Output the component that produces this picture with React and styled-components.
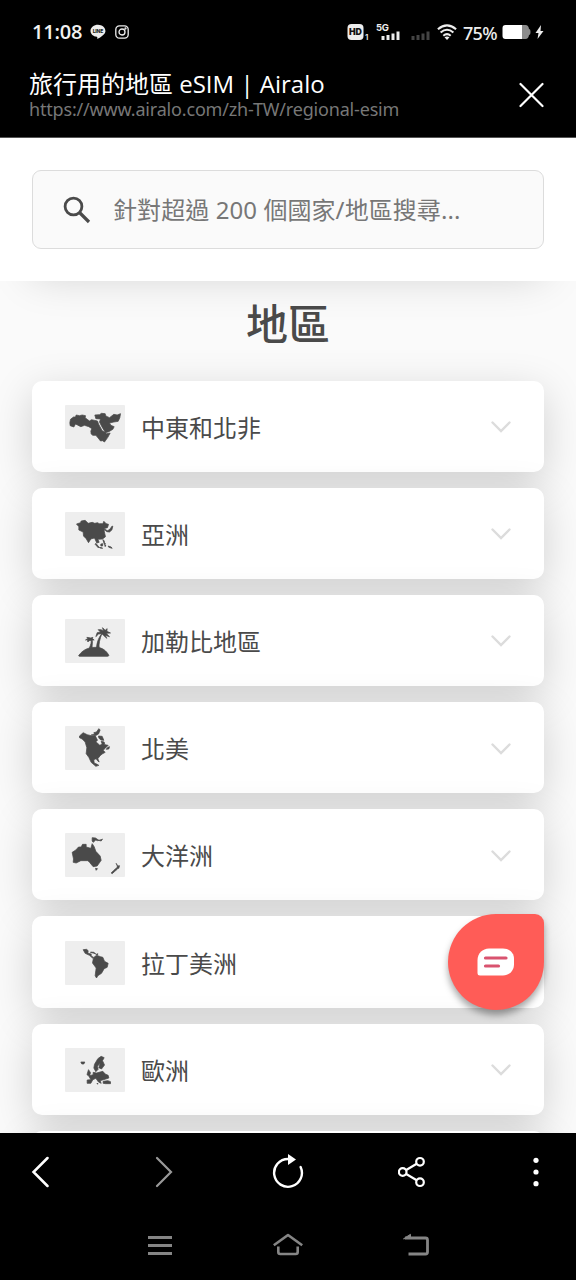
import React from "react";
import styled, { createGlobalStyle } from "styled-components";

const regions = [
    { id: "mena", name: "中東和北非" },
    { id: "asia", name: "亞洲" },
    { id: "caribbean", name: "加勒比地區" },
    { id: "northAmerica", name: "北美" },
    { id: "oceania", name: "大洋洲" },
    { id: "latinAmerica", name: "拉丁美洲" },
    { id: "europe", name: "歐洲" },
];

const shapes = {
    mena: [
        "M13 53L15 43L24 36L30 36L32 30L42 32L50 30L60 32L59 38L65 43L72 48L78 44L96 48L99 57L110 77L119 82L123 86L134 84L127 97L117 111L111 107L105 108L98 99L91 91L82 91L77 87L76 78L79 71L70 65L57 61L46 65L36 60L30 57L25 66L14 62Z",
        "M88 30L102 29L108 25L119 26L121 33L132 38L145 28L155 30L165 26L163 38L158 49L145 51L132 54L136 61L146 65L142 73L130 80L120 83L109 65L102 51L105 42L91 41Z",
    ],
    asia: [
        "M33 36L45 32L47 27L59 25L68 34L80 31L88 34L96 32L101 35L112 35L115 28L122 35L129 37L126 47L118 49L116 57L118 66L120 74L111 81L97 82L101 91L94 93L87 78L76 81L69 92L62 80L54 72L53 60L40 54L40 44Z",
        "M130 54L135 49L140 42L142 43L139 54L132 60L124 59L119 55L118 52L126 56Z",
        "M112 83L116 86L117 92L120 96L117 98Z",
        "M91 94L101 106L99 108L89 97Z M102 106L111 108L111 109L103 108Z M106 96L112 95L111 102L106 102Z M118 99L121 99L119 104Z M128 102L137 105L140 109L130 106Z",
    ],
    caribbean: [
        "M40 109C52 93 67 85 90 85C111 85 122 95 130 109C130 111 128 112 126 112H43C40 112 39 111 40 109Z",
        "M72 86C76 77 78 70 77 64L71 65L67 69L66 62L60 63L67 58L64 55L76 57L82 55L81 59L86 63L80 63C82 70 79 80 80 86Z",
        "M93 87C94 68 101 53 109 44L99 45L91 53L95 41L105 39L98 32L106 32L114 35L111 26L119 34L125 29L124 37L135 42L122 43L132 53L119 49L124 58L115 50L109 44C103 60 99 75 101 88Z",
    ],
    northAmerica: [
        "M42 30L53 20L65 26L77 29L90 31L96 43L91 47L103 58L110 54L107 46L116 48L118 56L128 58L120 66L113 73L119 79L110 84L104 89L97 98L101 108L96 104L92 98L85 101L86 111L95 115L100 118L91 121L77 109L70 94L62 83L64 65L59 48L50 39L42 35Z",
        "M77 27L87 25L85 20L93 18L100 8L104 12L99 24L90 29Z M82 32L89 30L87 38Z M99 30L110 31L115 43L106 42L100 36Z M127 64L132 62L130 69L122 70Z",
    ],
    oceania: [
        "M20 58L31 51L39 42L47 42L51 34L62 34L62 42L76 46L80 32L86 41L91 55L104 69L107 82L95 99L83 101L72 88L67 83L46 83L32 90L23 88L24 78Z",
        "M80 14L90 15L100 22L96 23L91 21L83 28L80 24Z M99 22L107 20L111 18L107 24Z M90 106L96 107L92 112Z",
        "M152 91L156 99L162 98L160 106L153 107L156 99Z M152 106L155 109L148 115L140 122L137 120L145 112Z",
    ],
    latinAmerica: [
        "M53 26L63 25L68 29L67 37L77 39L77 45L84 49L81 51L72 43L59 37Z",
        "M75 33L85 34L91 39L83 36L76 35Z M92 40L97 38L96 42Z",
        "M84 50L93 43L105 47L112 49L117 61L128 67L125 79L116 83L108 97L97 104L93 111L89 104L91 88L92 81L81 66Z",
    ],
    europe: [
        "M46 42L58 42L55 48L49 48Z M65 78L69 65L75 74L72 84L65 81Z",
        "M85 60L87 49L97 32L107 25L116 29L111 38L117 51L108 63L100 59L104 45L96 55L98 64L91 71Z",
        "M70 84L83 80L83 73L93 75L112 70L119 78L128 82L130 90L121 93L111 96L104 98L107 106L99 102L91 91L82 95L76 106L65 106L65 96L76 95Z",
        "M113 100L127 98L135 101L135 107L120 107L113 106Z M95 105L98 108L95 108Z",
    ],
};

const RegionArt = ({ id }) => (
    <svg width="60" height="44" viewBox="0 0 177 132" fill="#4a4a4a" stroke="#4a4a4a" strokeWidth="2.2" strokeLinejoin="round">
        {shapes[id].map((d) => (
            <path key={d} d={d} />
        ))}
    </svg>
);

const StatusIcons = () => (
    <>
        <svg width="24" height="18" viewBox="0 0 24 18">
            <rect x="1.500" y="1" width="16" height="16" rx="4" fill="#ededed" />
            <text x="9.500" y="12.400" textAnchor="middle" fontSize="9" fontWeight="900" fontFamily="Inter" textLength="13" lengthAdjust="spacingAndGlyphs" fill="#111">HD</text>
            <text x="19" y="16.500" fontSize="8" fontWeight="600" fontFamily="Inter" fill="#e8e8e8">1</text>
        </svg>
        <svg width="26" height="18" viewBox="0 0 26 18" fill="#ededed">
            <text x="0" y="8" fontSize="9.5" fontWeight="700" fontFamily="Inter" textLength="13">5G</text>
            <path d="M5.500 13h3v4h-3zM10.500 12h3v5h-3zM15.500 10.500h3V17h-3zM20.500 8.500h3V17h-3z" />
        </svg>
        <SecondSim width="20" height="18" viewBox="0 0 20 18" fill="#444">
            <path d="M.500 13h3v4h-3zM5.500 12h3v5h-3zM10.500 10.500h3V17h-3zM15.500 8.500h3V17h-3z" />
        </SecondSim>
        <svg width="20" height="18" viewBox="0 0 20 18" fill="none" stroke="#ededed" strokeWidth="2.100">
            <path d="M.9 6.200Q10 -1.500 19.100 6.200M3.600 9.500Q10 4 16.400 9.500M6.300 12.700Q10 9.600 13.700 12.700" />
            <path d="M7.500 14.200Q10 12.600 12.500 14.200L10 17Z" fill="#ededed" stroke="none" />
        </svg>
    </>
);

const App = () => {
    return (
        <Screen>
            <GlobalStyle />
            <StatusBar>
                <StatusGroup>
                    <Clock>11:08</Clock>
                    <svg width="16" height="16" viewBox="0 0 16 16">
                        <path d="M8 .8C3.900.8.5 3.500.5 6.900c0 3 2.700 5.400 6.300 5.900.8.200.4 1.100.5 2.300 2-1 7.200-3.800 8-7C16.100 4.200 12.500.8 8 .8Z" fill="#ededed" />
                        <text x="8" y="8.700" textAnchor="middle" fontSize="5" fontWeight="800" fontFamily="Inter" textLength="10.500" fill="#222">LINE</text>
                    </svg>
                    <svg width="14" height="14" viewBox="0 0 14 14" fill="none" stroke="#ededed" strokeWidth="1.300">
                        <rect x=".8" y=".8" width="12.400" height="12.400" rx="3.600" />
                        <circle cx="7" cy="7" r="3" />
                        <circle cx="10.500" cy="3.500" r=".5" />
                    </svg>
                </StatusGroup>
                <StatusGroup className="system">
                    <StatusIcons />
                    <Percent>75%</Percent>
                    <svg width="43" height="16" viewBox="0 0 43 16">
                        <path d="M4.500 1H21v14H4.500a3 3 0 0 1-3-3V4a3 3 0 0 1 3-3Z" fill="#fff" />
                        <path d="M21.500 1h3q3 0 3.500 4 1.500 0 1.500 3t-1.500 3q-.5 4-3.500 4h-3.500V1Z" fill="#8c8c8c" />
                        <path d="M40 1l-5.500 8h3l-1 6 6-8h-3Z" fill="#ededed" />
                    </svg>
                </StatusGroup>
            </StatusBar>
            <TitleBar>
                <div>
                    <PageTitle>旅行用的地區 eSIM | Airalo</PageTitle>
                    <PageUrl>https://www.airalo.com/zh-TW/regional-esim</PageUrl>
                </div>
                <svg width="26" height="26" viewBox="0 0 26 26" stroke="#fff" strokeWidth="2.200" strokeLinecap="round">
                    <path d="M2.500 2l22 22M24.500 2l-22 22" />
                </svg>
            </TitleBar>
            <SearchSection>
                <SearchBox>
                    <svg width="28" height="28" viewBox="0 0 28 28" fill="none" stroke="#4a4a4a" strokeWidth="2.800">
                        <circle cx="10.500" cy="10.500" r="8.400" />
                        <path d="M16.500 16.500l9.500 9.500" strokeWidth="3.200" />
                    </svg>
                    <Placeholder>針對超過 200 個國家/地區搜尋...</Placeholder>
                </SearchBox>
            </SearchSection>
            <Content>
                <Heading>地區</Heading>
                <RegionList>
                    {regions.map((region) => (
                        <RegionCard key={region.id}>
                            <Thumb>
                                <RegionArt id={region.id} />
                            </Thumb>
                            <RegionName>{region.name}</RegionName>
                            <svg width="20" height="12" viewBox="0 0 20 12" fill="none" stroke="#dcdcdc" strokeWidth="2.400" strokeLinecap="round">
                                <path d="M1.500 1.500L10 10l8.500-8.500" />
                            </svg>
                        </RegionCard>
                    ))}
                    <RegionCard />
                </RegionList>
            </Content>
            <ChatButton aria-label="chat">
                <svg width="38" height="28" viewBox="0 0 38 28">
                    <path d="M12 .5h14c6.500 0 11 4.500 11 10v6c0 6-4.500 11-11 11H3a2.500 2.500 0 0 1-2.500-2.500V12C.5 5.500 5.500.5 12 .5Z" fill="#fff" />
                    <path d="M8.500 10H29M8.500 18h13" stroke="#d9536f" strokeWidth="3.200" strokeLinecap="round" />
                </svg>
            </ChatButton>
            <BrowserBar>
                <NavSlot>
                    <svg width="18" height="32" viewBox="0 0 18 32" fill="none" stroke="#fff" strokeWidth="2.500" strokeLinecap="round">
                        <path d="M16.500 2L2.500 16l14 14" />
                    </svg>
                </NavSlot>
                <NavSlot>
                    <svg width="18" height="32" viewBox="0 0 18 32" fill="none" stroke="#999" strokeWidth="2.200" strokeLinecap="round">
                        <path d="M2 2l14 14L2 30" />
                    </svg>
                </NavSlot>
                <NavSlot>
                    <svg width="32" height="36" viewBox="0 0 32 36" fill="none" stroke="#fff" strokeWidth="2.400" strokeLinecap="round">
                        <path d="M16 5A13.900 13.900 0 1 0 28.600 13" />
                        <path d="M16 0v11l8-5.500Z" fill="#fff" stroke="none" />
                    </svg>
                </NavSlot>
                <NavSlot>
                    <svg width="28" height="32" viewBox="0 0 28 32" fill="none" stroke="#fff" strokeWidth="2.200">
                        <circle cx="4.700" cy="16" r="3.800" />
                        <circle cx="22" cy="5.800" r="3.800" />
                        <circle cx="22" cy="26.200" r="3.800" />
                        <path d="M8.200 14l10.500-6.200M8.200 18l10.500 6.200" />
                    </svg>
                </NavSlot>
                <NavSlot>
                    <svg width="6" height="30" viewBox="0 0 6 30" fill="#fff">
                        <circle cx="3" cy="3.300" r="2.600" />
                        <circle cx="3" cy="15" r="2.600" />
                        <circle cx="3" cy="26.700" r="2.600" />
                    </svg>
                </NavSlot>
            </BrowserBar>
            <SystemNav>
                <NavSlot>
                    <svg width="26" height="24" viewBox="0 0 26 24" stroke="#858585" strokeWidth="3">
                        <path d="M1 4.500h24M1 12.500h24M1 20.500h24" />
                    </svg>
                </NavSlot>
                <NavSlot>
                    <svg width="32" height="24" viewBox="0 0 32 24" fill="none" stroke="#858585" strokeWidth="2.600">
                        <path d="M1.800 12.300L16 2l14.200 10.300" strokeLinejoin="round" />
                        <path d="M6.300 13.500V19a2 2 0 0 0 2 2h15.400a2 2 0 0 0 2-2v-5.500" />
                    </svg>
                </NavSlot>
                <NavSlot>
                    <svg width="28" height="24" viewBox="0 0 28 24" fill="none" stroke="#858585" strokeWidth="2.800">
                        <path d="M3 5h20.500a2 2 0 0 1 2 2V19a2 2 0 0 1-2 2H6.500" />
                        <path d="M1.500 5.800L8.500 1.300v3.700Z" fill="#858585" strokeWidth="1" />
                    </svg>
                </NavSlot>
            </SystemNav>
        </Screen>
    );
};

export default App;

const GlobalStyle = createGlobalStyle`
    * {
        box-sizing: border-box;
    }

    body {
        margin: 0;
        background: #000;
        font-family: "Noto Sans", "Noto Sans CJK TC", sans-serif;
    }

    svg {
        display: block;
        flex-shrink: 0;
    }
`;

const Screen = styled.div`
    position: relative;
    display: flex;
    flex-direction: column;
    width: 576px;
    height: 1280px;
    overflow: hidden;
    background: #000;
`;

const StatusBar = styled.div`
    display: flex;
    justify-content: space-between;
    height: 64px;
    padding: 0 32px;
`;

const StatusGroup = styled.div`
    display: flex;
    align-items: center;
    gap: 9px;
    height: 64px;

    &.system {
        gap: 6px;
    }
`;

const SecondSim = styled.svg`
    margin-left: 3px;
`;

const Clock = styled.span`
    width: 49px;
    color: #f2f2f2;
    font-family: "Open Sans", sans-serif;
    font-size: 20px;
    font-weight: 600;
    letter-spacing: -0.2px;
    line-height: 24px;
`;

const Percent = styled.span`
    width: 32px;
    color: #ededed;
    font-family: "Noto Sans", sans-serif;
    font-size: 18px;
    font-weight: 500;
    letter-spacing: -0.7px;
    line-height: 24px;
    padding-top: 1px;
`;

const TitleBar = styled.div`
    display: flex;
    justify-content: space-between;
    align-items: flex-start;
    height: 74px;
    padding: 4px 32px 0 29px;
    border-bottom: 1px solid #555;

    & > svg {
        margin-top: 14px;
    }
`;

const PageTitle = styled.div`
    color: #fff;
    font-family: "Open Sans", "Noto Sans CJK TC", sans-serif;
    font-size: 24px;
    line-height: 32px;
    white-space: nowrap;
`;

const PageUrl = styled.div`
    color: #777;
    font-size: 18px;
    letter-spacing: -0.18px;
    line-height: 18px;
    white-space: nowrap;
`;

const SearchSection = styled.div`
    position: relative;
    z-index: 1;
    height: 143px;
    padding: 32px 32px 0;
    background: #fff;
    box-shadow: 0 26px 44px -32px rgba(0, 0, 0, 0.18);
`;

const SearchBox = styled.div`
    display: flex;
    align-items: center;
    gap: 22px;
    height: 79px;
    padding-left: 30px;
    background: #fafafa;
    border: 1px solid #dcdcdc;
    border-radius: 9px;
`;

const Placeholder = styled.span`
    color: #777;
    font-size: 24px;
    letter-spacing: 0.08px;
    line-height: 32px;
    white-space: nowrap;
`;

const Content = styled.div`
    flex: 1;
    min-height: 0;
    overflow: hidden;
    padding: 0 32px;
    background: #fafafa;
`;

const Heading = styled.h1`
    margin: 0;
    padding-top: 11px;
    height: 99.5px;
    color: #4a4a4a;
    font-family: "Noto Sans CJK TC", sans-serif;
    font-size: 42px;
    font-weight: 500;
    line-height: 60px;
    text-align: center;
`;

const RegionList = styled.div`
    display: flex;
    flex-direction: column;
    gap: 16px;
`;

const RegionCard = styled.div`
    display: flex;
    align-items: center;
    flex-shrink: 0;
    height: 91.2px;
    padding: 1px 33px 0;
    background: #fff;
    border-radius: 10px;
    box-shadow: 0 11px 40px rgba(0, 0, 0, 0.17);

    & > svg {
        margin-top: 1px;
    }
`;

const Thumb = styled.div`
    width: 60px;
    height: 44px;
    background: #eee;
    border-radius: 1px;
`;

const RegionName = styled.span`
    flex: 1;
    margin-left: 16px;
    color: #4a4a4a;
    font-family: "Noto Sans CJK TC", sans-serif;
    font-size: 24px;
    line-height: 36px;
`;

const ChatButton = styled.button`
    position: absolute;
    z-index: 2;
    left: 448px;
    top: 914px;
    display: flex;
    justify-content: center;
    align-items: center;
    width: 96px;
    height: 96px;
    padding: 0;
    border: none;
    border-radius: 48px 9px 48px 48px;
    background: #ff5c57;
    box-shadow: 0 5px 7px rgba(0, 0, 0, 0.35);
`;

const NavSlot = styled.div`
    display: flex;
    justify-content: center;
    width: 32px;
`;

const BrowserBar = styled.div`
    display: flex;
    justify-content: space-between;
    align-items: center;
    height: 77px;
    padding: 0 24px;
    background: #000;
`;

const SystemNav = styled.div`
    display: flex;
    justify-content: center;
    align-items: center;
    gap: 96px;
    height: 70px;
    background: #000;
`;
